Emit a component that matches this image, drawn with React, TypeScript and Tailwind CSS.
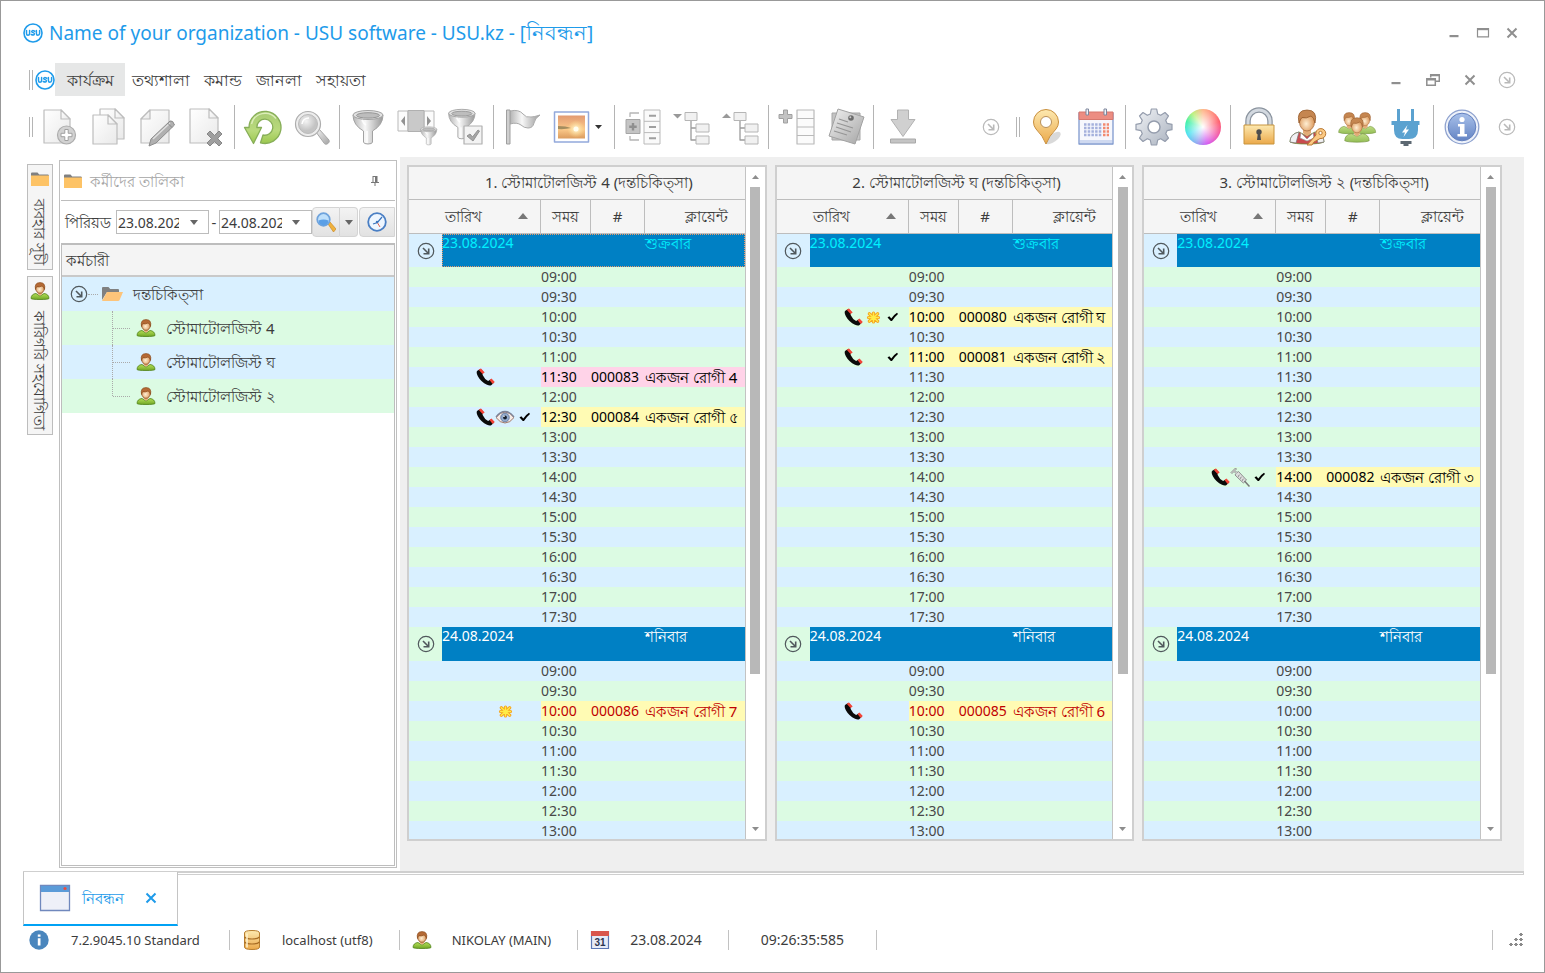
import type { ReactNode } from "react";
import clsx from "clsx";

type Mark = "phone" | "sun" | "eye" | "syringe" | "check";

interface Visit {
	code: string;
	client: string;
	marks: Mark[];
	tone: "yellow" | "pink";
	unpaid?: boolean;
}

interface Doctor {
	title: string;
	focused?: boolean;
	visits: Record<string, Visit>;
}

const DAYS = [
	{ date: "23.08.2024", weekday: "শুক্রবার", from: 18, to: 35, color: "text-[#00f0ff]" },
	{ date: "24.08.2024", weekday: "শনিবার", from: 18, to: 26, color: "text-white" },
];

const DOCTORS: Doctor[] = [
	{
		title: "1. স্টোমাটোলজিস্ট 4 (দন্তচিকিত্সা)",
		focused: true,
		visits: {
			"23.08.2024 11:30": { code: "000083", client: "একজন রোগী 4", marks: ["phone"], tone: "pink" },
			"23.08.2024 12:30": { code: "000084", client: "একজন রোগী ৫", marks: ["phone", "eye", "check"], tone: "yellow" },
			"24.08.2024 10:00": { code: "000086", client: "একজন রোগী 7", marks: ["sun"], tone: "yellow", unpaid: true },
		},
	},
	{
		title: "2. স্টোমাটোলজিস্ট ঘ (দন্তচিকিত্সা)",
		visits: {
			"23.08.2024 10:00": { code: "000080", client: "একজন রোগী ঘ", marks: ["phone", "sun", "check"], tone: "yellow" },
			"23.08.2024 11:00": { code: "000081", client: "একজন রোগী ২", marks: ["phone", "check"], tone: "yellow" },
			"24.08.2024 10:00": { code: "000085", client: "একজন রোগী 6", marks: ["phone"], tone: "yellow", unpaid: true },
		},
	},
	{
		title: "3. স্টোমাটোলজিস্ট ২ (দন্তচিকিত্সা)",
		visits: {
			"23.08.2024 14:00": { code: "000082", client: "একজন রোগী ৩", marks: ["phone", "syringe", "check"], tone: "yellow" },
		},
	},
];

const formatSlot = (slot: number) =>
	`${String(Math.floor(slot / 2)).padStart(2, "0")}:${slot % 2 ? "30" : "00"}`;

/* ---------- shared gradients ---------- */

const Gradients = () => (
	<svg className="absolute h-0 w-0" aria-hidden="true">
		<defs>
			<linearGradient id="paper" x1="0" y1="0" x2="1" y2="1">
				<stop offset="0" stopColor="#fff" />
				<stop offset="1" stopColor="#e9e9e9" />
			</linearGradient>
			<linearGradient id="steel" x1="0" y1="0" x2="1" y2="1">
				<stop offset="0" stopColor="#f2f2f2" />
				<stop offset="1" stopColor="#a4a4a4" />
			</linearGradient>
			<linearGradient id="funnel" x1="0" y1="0" x2="1" y2="0">
				<stop offset="0" stopColor="#b4b4b4" />
				<stop offset=".4" stopColor="#f8f8f8" />
				<stop offset="1" stopColor="#989898" />
			</linearGradient>
			<linearGradient id="green" x1="0" y1="0" x2="0" y2="1">
				<stop offset="0" stopColor="#a8cb74" />
				<stop offset=".6" stopColor="#b9da7c" />
				<stop offset="1" stopColor="#9cc84f" />
			</linearGradient>
			<linearGradient id="gear" x1="0" y1="0" x2="1" y2="1">
				<stop offset="0" stopColor="#f1f3f6" />
				<stop offset="1" stopColor="#aab2bf" />
			</linearGradient>
			<linearGradient id="gold" x1="0" y1="0" x2="0" y2="1">
				<stop offset="0" stopColor="#fde9b0" />
				<stop offset="1" stopColor="#eba94a" />
			</linearGradient>
			<linearGradient id="blue" x1="0" y1="0" x2="0" y2="1">
				<stop offset="0" stopColor="#a9c1ea" />
				<stop offset="1" stopColor="#6484c4" />
			</linearGradient>
			<linearGradient id="sunset" x1="0" y1="0" x2="0" y2="1">
				<stop offset="0" stopColor="#e29a72" />
				<stop offset=".6" stopColor="#fbc98a" />
				<stop offset="1" stopColor="#dc9c5e" />
			</linearGradient>
			<linearGradient id="shirt" x1="0" y1="0" x2="0" y2="1">
				<stop offset="0" stopColor="#b5df57" />
				<stop offset="1" stopColor="#71a726" />
			</linearGradient>
			<linearGradient id="softShirt" x1="0" y1="0" x2="0" y2="1">
				<stop offset="0" stopColor="#c0dd85" />
				<stop offset="1" stopColor="#93bd55" />
			</linearGradient>
			<radialGradient id="glow">
				<stop offset="0" stopColor="#fffbe0" />
				<stop offset="1" stopColor="#ffe08a" stopOpacity="0" />
			</radialGradient>
			<radialGradient id="face" cx=".45" cy=".6">
				<stop offset="0" stopColor="#ffeed2" />
				<stop offset="1" stopColor="#dfa066" />
			</radialGradient>
			<radialGradient id="lens" cx=".4" cy=".35">
				<stop offset="0" stopColor="#f4f4f4" />
				<stop offset="1" stopColor="#c4c4c4" />
			</radialGradient>
		</defs>
	</svg>
);

/* ---------- small icons ---------- */

const Logo = () => (
	<svg className="h-5 w-5 shrink-0" viewBox="0 0 20 20" aria-hidden="true">
		<circle cx="10" cy="10" r="9" fill="#fff" stroke="#1e9bea" strokeWidth="1.6" />
		<path
			d="M3.500 7.500v3q0 1.800 1.500 1.800t1.600-1.800v-3M11.700 8.200q-2.800-1.300-3 .3c-.1 1.400 2.800.9 2.700 2.400q-.3 1.800-3.200.6M13.400 7.500v3q0 1.800 1.500 1.800t1.700-1.800v-3"
			fill="none"
			stroke="#1e9bea"
			strokeWidth="1.500"
			strokeLinecap="round"
		/>
	</svg>
);

const CircleArrow = ({ dark = false }: { dark?: boolean }) => (
	<svg
		className={clsx("h-[18px] w-[18px]", dark ? "text-[#50585c]" : "text-[#b9b9b9]")}
		viewBox="0 0 18 18"
		fill="none"
		stroke="currentColor"
		aria-hidden="true">
		<circle cx="9" cy="9" r="7.700" strokeWidth="1.200" />
		<path d="M6 6l5.200 5.200M11.700 6.500v5.200H6.500" strokeWidth="1.600" />
	</svg>
);

const Triangle = ({ up = false, className = "" }: { up?: boolean; className?: string }) => (
	<svg className={clsx("fill-current", className)} viewBox="0 0 10 6" preserveAspectRatio="none" aria-hidden="true">
		<path d={up ? "M0 6L5 0l5 6z" : "M0 0h10L5 6z"} />
	</svg>
);

const UserIcon = () => (
	<svg className="h-[18px] w-5 shrink-0" viewBox="0 0 20 18" aria-hidden="true">
		<path d="M1 16.500Q1.200 12 6 11.500L10 14l4-2.500q4.800.5 5 5-1 1-9 1t-9-1z" fill="url(#shirt)" stroke="#4f8218" strokeWidth=".8" />
		<path d="M7.700 9.500h4.600v2.600L10 13.800l-2.300-1.700z" fill="#e9b27a" />
		<ellipse cx="10" cy="6.300" rx="4.300" ry="5" fill="url(#face)" stroke="#8b4d20" strokeWidth=".8" />
		<path d="M5.500 7.500Q4 .6 10 .6t4.500 6.900Q14 4.500 12 4 9 5.500 6.900 4.700 5.800 5.500 5.500 7.500z" fill="#b56a35" stroke="#874618" strokeWidth=".6" />
	</svg>
);

const FolderIcon = () => (
	<svg className="h-[14px] w-[18px] shrink-0" viewBox="0 0 18 14" aria-hidden="true">
		<path d="M0 4V1.500Q0 .5 1 .5h5.500l1.700 2H17q1 0 1 1.500z" fill="#808080" />
		<path d="M0 3.500h18V14H0z" fill="#fdc366" />
	</svg>
);

const OpenFolderIcon = () => (
	<svg className="h-[14px] w-[21px] shrink-0" viewBox="0 0 21 14" aria-hidden="true">
		<path d="M0 13V1q0-1 1-1h5.500L8.200 2H16q1 0 1 1v2H5z" fill="#808080" />
		<path d="M0 14L5 5h16l-3.500 8.200q-.4.8-1.500.8z" fill="#fdc47a" />
	</svg>
);

const PinIcon = () => (
	<svg className="h-[10px] w-2" viewBox="0 0 8 10" aria-hidden="true">
		<path d="M1.500 0h5v6H8v1H4.500v3h-1V7H0V6h1.500z" fill="#777" />
		<path d="M2.500 1h1.500v5H2.500z" fill="#fff" />
	</svg>
);

const MarkIcon = ({ kind }: { kind: Mark }) => {
	switch (kind) {
		case "phone":
			return (
				<svg className="h-5 w-5" viewBox="0 0 20 20" aria-hidden="true">
					<path d="M2 4Q1 5.500 3 9.500q3 5.500 9 8.200 3 1.300 4.500.2L19 15.500l-3.500-3-2.400 1.600Q9.500 12 7.500 7.700L8.500 5l-3-3.200z" fill="#0a0a0a" />
					<path d="M3.700 2.700L6 1.400l3.700 4.100L7.500 6.900zM14.500 13.100l2-1.700 3.300 3.600-2.200 2.100z" fill="#f44438" />
				</svg>
			);
		case "sun":
			return (
				<svg className="h-5 w-5" viewBox="0 0 20 20" aria-hidden="true">
					<g strokeLinecap="round">
						<path d="M6.300 6.800l8.400 7.400M14.700 6.800l-8.400 7.400M10.500 6v9M5.500 10.500h10" stroke="#f5a21f" strokeWidth="3.200" />
						<path d="M6.300 6.800l8.400 7.400M14.700 6.800l-8.400 7.400M10.500 6v9M5.500 10.500h10" stroke="#ffec45" strokeWidth="1.400" />
					</g>
				</svg>
			);
		case "eye":
			return (
				<svg className="h-5 w-5" viewBox="0 0 20 20" aria-hidden="true">
					<path d="M1 10.500Q5 5 10 5t9 5.500q-4 5.500-9 5.500t-9-5.500z" fill="#f5ece8" stroke="#a1786a" strokeWidth="1" />
					<path d="M1 10Q5 4.500 10 4.500t9 5.500" fill="none" stroke="#7d8499" strokeWidth="1.300" />
					<circle cx="10" cy="10.500" r="4.300" fill="#93abce" stroke="#5d7196" strokeWidth=".8" />
					<circle cx="10" cy="10.500" r="1.900" fill="#17202f" />
					<circle cx="9" cy="9.200" r=".8" fill="#fff" />
				</svg>
			);
		case "syringe":
			return (
				<svg className="h-5 w-5" viewBox="0 0 20 20" aria-hidden="true">
					<path d="M1 5.500L5.500 1l1 1-1.500 1.500 2 2 1.500-1L16.500 13l-3.200 3L5 8l1-1.500-2-2L2 6.500z" fill="#dcdcdc" stroke="#858585" strokeWidth=".9" />
					<path d="M8 9.500l1.500-1.400M10 11.500l1.500-1.400M12 13.500l1.500-1.400" stroke="#666" strokeWidth=".9" />
					<path d="M14.500 14l5 5.500" stroke="#777" strokeWidth="1.500" />
				</svg>
			);
		case "check":
			return (
				<svg className="h-5 w-5" viewBox="0 0 20 20" aria-hidden="true">
					<path d="M4.500 10.500l1.800-1.300 2 2.300Q10.500 8 14 5.800l1 1.200q-3.500 3-6 7H7.800z" fill="#000" />
				</svg>
			);
	}
};

/* ---------- toolbar icons ---------- */

const Big = ({ children }: { children: ReactNode }) => (
	<svg className="h-9 w-9 overflow-visible" viewBox="0 0 36 36" fill="none" strokeLinejoin="round" aria-hidden="true">
		{children}
	</svg>
);

const Page = ({ x = 2, y = 1, w = 26, h = 33 }: { x?: number; y?: number; w?: number; h?: number }) => (
	<g fill="url(#paper)" stroke="#bdbdbd" strokeWidth="1.200">
		<path d={`M${x} ${y}h${w - 9}l9 9v${h - 9}h${-w}z`} />
		<path d={`M${x + w - 9} ${y}v9h9z`} />
	</g>
);

const NewIcon = () => (
	<Big>
		<Page />
		<circle cx="24.500" cy="26" r="9" fill="#d2d2d2" stroke="#adadad" strokeWidth="1.200" />
		<path d="M22.800 20.500h3.400v3.800H30v3.400h-3.800v3.800h-3.400v-3.800H19v-3.400h3.800z" fill="#fff" stroke="#a0a0a0" />
	</Big>
);

const CopyIcon = () => (
	<Big>
		<Page x={9} y={0} w={24} h={30} />
		<Page x={2} y={6} w={24} h={29} />
	</Big>
);

const EditIcon = () => (
	<Big>
		<g fill="url(#paper)" stroke="#bdbdbd" strokeWidth="1.200">
			<path d="M1 10l9-9h19v33H1z" />
			<path d="M1 10h9V1z" />
		</g>
		<path d="M9 37l2-7 19-18q3-1 4.500 4L16 34z" fill="#b0b0b0" stroke="#8c8c8c" />
		<path d="M13 30l17-16" stroke="#e0e0e0" strokeWidth="1.300" />
		<path d="M27.500 14l4.500 4.500" stroke="#888" />
	</Big>
);

const DeleteIcon = () => (
	<Big>
		<Page x={1} y={0} w={28} h={34} />
		<path d="M18 25l3-3 4.500 4.500L30 22l3 3-4.500 4.500L33 34l-3 3-4.500-4.500L21 37l-3-3 4.500-4.500z" fill="#9f9f9f" stroke="#878787" />
	</Big>
);

const RefreshIcon = () => (
	<Big>
		<path
			d="M4 18.500A16 16 0 1 1 15.500 33.800L18 26a8 8 0 1 0-6.200-7.500h4.700L8.500 34.500-.5 18.500z"
			fill="url(#green)"
			stroke="#87ae58"
			strokeWidth="1.300"
		/>
		<path d="M6.500 15A14 14 0 0 1 31 9.500" stroke="#dcedba" strokeWidth="1.400" />
	</Big>
);

const SearchIcon = () => (
	<Big>
		<path d="M22 23l3-3L35 31q1 2-1 3.500t-3.500.2z" fill="url(#steel)" stroke="#a8a8a8" />
		<circle cx="14" cy="15" r="12.500" fill="#ededed" stroke="#adadad" strokeWidth="1.200" />
		<circle cx="14" cy="15" r="9.500" fill="url(#lens)" stroke="#bbb" />
		<path d="M8 15q1-6 7-6" stroke="#fff" strokeWidth="1.500" />
	</Big>
);

const FunnelShape = () => (
	<>
		<path d="M3 6q0 10 10.500 16V33q0 2 4.500 2t4.500-2V22Q33 16 33 6z" fill="url(#funnel)" stroke="#a2a2a2" />
		<ellipse cx="18" cy="6" rx="15" ry="4.500" fill="#e2e2e2" stroke="#a2a2a2" />
		<ellipse cx="18" cy="6.400" rx="11.500" ry="2.700" fill="#bdbdbd" stroke="#959595" />
		<path d="M17 22v12M12 11q2 4 4 5" stroke="#fff" strokeWidth="1.800" opacity=".8" />
	</>
);

const FilterIcon = () => (
	<Big>
		<FunnelShape />
	</Big>
);

const ColumnFilterIcon = () => (
	<Big>
		<path d="M-1 2h10v20H-1zM25 2h10v20H25z" fill="#fbfbfb" stroke="#b9b9b9" />
		<path d="M9 1.500h16v21H9z" fill="#c9c9c9" stroke="#b0b0b0" />
		<path d="M6 7v10l-4-5zM28 7v10l4-5z" fill="#929292" />
		<g transform="translate(20 17) scale(.54)">
			<FunnelShape />
		</g>
	</Big>
);

const FilterCheckIcon = () => (
	<Big>
		<g transform="translate(-2 -1) scale(.88)">
			<FunnelShape />
		</g>
		<path d="M16 17h18v18H16z" fill="#f3f3f3" stroke="#b0b0b0" strokeWidth="1.200" />
		<path d="M19 27l3-2 2.500 3 5.500-7 1.500 1-6.500 10z" fill="#a6a6a6" stroke="#929292" />
	</Big>
);

const FlagIcon = () => (
	<Big>
		<path d="M6 2q9-2 13 3 3 4 8 3 3 0 9-2-5 3-6 8t-6 5q-4 0-7-3-4-3-11-1z" fill="url(#funnel)" stroke="#aaa" />
		<path d="M2.500 1H6v34H2.500z" fill="#cfcfcf" stroke="#9f9f9f" />
	</Big>
);

const PictureIcon = () => (
	<Big>
		<path d="M1.500 3h34v30h-34z" fill="#fff" stroke="#93a9db" strokeWidth="1.500" />
		<path d="M5 6.500h27v23H5z" fill="url(#sunset)" />
		<circle cx="23" cy="20" r="9" fill="url(#glow)" />
		<path d="M5 17q8 0 13 2-6 1.500-13 1z" fill="#8e7f55" opacity=".8" />
		<circle cx="23" cy="20" r="2.500" fill="#fffef0" />
	</Big>
);

const ExpandListIcon = () => (
	<Big>
		<path d="M19 1h16v34H19zM19 12.300h16M19 23.600h16" fill="#fafafa" stroke="#bababa" />
		<path d="M24 6.700h7M24 18h7M24 29.300h7" stroke="#9f9f9f" strokeWidth="2" />
		<path d="M1 10.500h14v14H1z" fill="#c4c4c4" stroke="#a6a6a6" />
		<path d="M8 14v7.500M4.200 17.700h7.500" stroke="#8f8f8f" strokeWidth="2.400" />
		<path d="M5 8V4h9M5 27v4h9" stroke="#b5b5b5" strokeWidth="1.300" />
	</Big>
);

const TreeIcon = ({ up = false }: { up?: boolean }) => (
	<Big>
		<path d={up ? "M-1 9h9L3.500 4.500z" : "M-1 5h9L3.500 9.500z"} fill="#999" />
		<path d="M17 11v20h6M17 19h6" stroke="#9c9c9c" strokeWidth="1.300" />
		<path d="M11 3.500h12v8H11zM22 15h13v8H22zM22 27h13v8H22z" fill="#f1f1f1" stroke="#b5b5b5" />
	</Big>
);

const AddRowsIcon = () => (
	<Big>
		<path d="M4.500 1h4v4.500H13v4H8.500V14h-4V9.500H0v-4h4.500z" fill="#c3c3c3" stroke="#a0a0a0" />
		<path d="M18 1h17v34H18zM18 9.500h17M18 18h17M18 26.500h17" fill="#fbfbfb" stroke="#bababa" strokeWidth="1.200" />
	</Big>
);

const NotesIcon = () => (
	<Big>
		<path d="M4 4h28v27H4z" fill="#c4c4c4" stroke="#a6a6a6" />
		<path d="M10 0l26 8-9 27-26-8z" fill="url(#steel)" stroke="#a2a2a2" />
		<path d="M11 10l9 3M9 14l16 5M8 18l15 5M6 22l13 4" stroke="#959595" strokeWidth="1.200" />
		<circle cx="23" cy="9" r="2.800" fill="#6c6c6c" />
		<circle cx="22.300" cy="8.200" r="1" fill="#ccc" />
	</Big>
);

const DownloadIcon = () => (
	<Big>
		<path d="M13.500 1h11v9.500H31L19 27.500 7 10.500h6.500z" fill="#d0d0d0" stroke="#b2b2b2" />
		<path d="M6.500 30h25v4h-25z" fill="#c4c4c4" stroke="#a8a8a8" />
	</Big>
);

const PlaceIcon = () => (
	<Big>
		<ellipse cx="22" cy="29" rx="9" ry="4" fill="#777" opacity=".28" transform="rotate(-35 22 29)" />
		<path d="M15 35Q12 27 5 20 2.500 17 2.500 13a12.500 12.500 0 0 1 25 0q0 4-2.500 7-7 7-10 15z" fill="url(#gold)" stroke="#c98f3d" />
		<circle cx="15" cy="13" r="5.500" fill="#fff" stroke="#b8905a" />
	</Big>
);

const CalendarIcon = () => (
	<Big>
		<path d="M-1 4h34v31H-1z" fill="#f6f7fc" stroke="#7f99ce" strokeWidth="1.300" />
		<path d="M-1 3h34v7.500H-1z" fill="#ec8d82" stroke="#d6776d" />
		<path d="M6 0h2.500v6H6zM24 0h2.500v6H24z" fill="#eef1f8" stroke="#7e879c" />
		<path d="M4 15.500h18M4 19h18M4 22.500h18M4 26h18" stroke="#a5b1dc" strokeWidth="2.400" strokeDasharray="2.500 1.200" />
		<path d="M23 15.500h6M23 19h6M23 22.500h6M23 26h6" stroke="#f28b70" strokeWidth="2.400" strokeDasharray="2.500 1.200" />
		<path d="M0 31h32v3H0z" fill="#cfd9f0" />
	</Big>
);

const GearIcon = () => (
	<Big>
		<path
			d="M15.300 0h5.400l1 5 3 1.300L29 3.500 32.500 7l-2.800 4.300 1.300 3 5 1v5.400l-5 1-1.300 3 2.800 4.300L29 32.500l-4.300-2.800-3 1.300-1 5h-5.400l-1-5-3-1.300L7 32.500 3.500 29l2.800-4.300-1.300-3-5-1v-5.400l5-1 1.300-3L3.500 7 7 3.500l4.300 2.800 3-1.300z"
			fill="url(#gear)"
			stroke="#959dad"
			strokeWidth="1.200"
		/>
		<circle cx="18" cy="18" r="6" fill="#fff" stroke="#959dad" strokeWidth="1.500" />
	</Big>
);

const ColorWheel = () => (
	<span className="h-9 w-9 rounded-full bg-[radial-gradient(circle,white_0%,transparent_75%),conic-gradient(#ffb080,#ff5060_20%,#f04ca8_34%,#d04cf0_46%,#8aa0f0_56%,#40e0f0_68%,#30f0a0_80%,#b8f070_90%,#ffb080)]" />
);

const LockIcon = () => (
	<Big>
		<path d="M7 17v-5a11 11 0 0 1 22 0v5" stroke="#8b949f" strokeWidth="5.500" />
		<path d="M7 17v-5a11 11 0 0 1 22 0v5" stroke="#d3d9e0" strokeWidth="3" />
		<path d="M3 16h30v19H3z" fill="url(#gold)" stroke="#c8943c" />
		<circle cx="18" cy="23" r="2.700" fill="#4d4d4d" />
		<path d="M17 23h2l1 8h-4z" fill="#4d4d4d" />
	</Big>
);

const Person = ({ shirt }: { shirt: string }) => (
	<>
		<path d="M1 33q0-8 9-10l8 4 8-4q9 2 9 10-4 2-17 2T1 33z" fill={shirt} stroke="#6d8a3a" strokeWidth=".8" />
		<path d="M14 19h8v5l-4 3.500-4-3.500z" fill="#e3ad77" />
		<ellipse cx="18" cy="13" rx="7.500" ry="9" fill="url(#face)" stroke="#a96d3f" strokeWidth=".8" />
		<path d="M10 14Q7 1 18 1t8 13q-1-6-4-7-5 3-9 1.500-2 2-3 5.500z" fill="#c58650" stroke="#965a2b" strokeWidth=".8" />
	</>
);

const UserKeyIcon = () => (
	<Big>
		<g transform="translate(-1 0)">
			<Person shirt="#c94a4e" />
			<path d="M1 33q0-8 9-10l-3 11zM35 33q0-8-9-10l3 11z" fill="#f1f1f3" stroke="#777" strokeWidth=".7" />
			<path d="M12 24l6 6 6-6 1 5-7 3-7-3z" fill="#fff" stroke="#999" strokeWidth=".7" />
		</g>
		<path d="M17 36l9-10a5 5 0 1 1 4 3.500L24 33l-2 3z" fill="#fbc983" stroke="#b97a35" />
		<circle cx="30.500" cy="24" r="1.700" fill="#fff" stroke="#b97a35" />
	</Big>
);

const UsersIcon = () => (
	<Big>
		<g transform="translate(-1 3) scale(.62)">
			<Person shirt="url(#softShirt)" />
		</g>
		<g transform="translate(15 3) scale(.62)">
			<Person shirt="url(#softShirt)" />
		</g>
		<g transform="translate(5 8) scale(.72)">
			<Person shirt="url(#softShirt)" />
		</g>
	</Big>
);

const PlugIcon = () => (
	<Big>
		<path d="M9 0h3v12H9zM23 0h3v12h-3z" fill="#5ba2d0" />
		<path d="M3.500 12h28v4H30v5q0 9-9 9h-6.500Q6 30 6 21v-5H3.500z" fill="#5ba2d0" />
		<path d="M19.500 16L14 23.500h3l-1.500 4.500 5.500-7.500h-3z" fill="#fff" />
		<path d="M12.500 32h11v3h-3v2h-5v-2h-3z" fill="#5d6872" />
	</Big>
);

const InfoIcon = () => (
	<Big>
		<circle cx="18" cy="18" r="16.800" fill="#eef2fa" stroke="#8ea2cf" strokeWidth="1.300" />
		<circle cx="18" cy="18" r="13.800" fill="url(#blue)" stroke="#6380be" />
		<circle cx="18" cy="10.500" r="2.600" fill="#fff" />
		<path d="M14 15h6.500v10H23v2.500h-9.500V25h2.500v-7.500h-2z" fill="#fff" />
	</Big>
);

/* ---------- building blocks ---------- */

const Handle = () => <span className="h-5 w-1 shrink-0 border-x border-[#b5b5b5]" />;

const Separator = () => <span className="mx-[3px] h-11 w-px shrink-0 bg-[#b4b4b4]" />;

const Tool = ({ label, children }: { label: string; children: ReactNode }) => (
	<button type="button" aria-label={label} className="flex h-11 w-[49px] shrink-0 items-center justify-center">
		{children}
	</button>
);

const DateField = ({ id, value, label }: { id: string; value: string; label: string }) => (
	<span className="flex h-6 w-[95px] items-center border border-[#bcbcbc] bg-white">
		<input
			id={id}
			aria-label={label}
			defaultValue={value}
			className="h-full w-[62px] bg-transparent pl-px text-sm outline-none"
		/>
		<button type="button" aria-label={label} className="flex h-full flex-1 items-center justify-center">
			<Triangle className="h-[5px] w-2 text-[#666]" />
		</button>
	</span>
);

const SideTab = ({ icon, text }: { icon: ReactNode; text: string }) => (
	<button
		type="button"
		className="flex w-[26px] flex-col items-center gap-[10px] border border-[#bdbdbd] bg-[#f5f5f5] py-1">
		<span className="flex h-5 items-center">{icon}</span>
		<span className="[writing-mode:vertical-rl]">{text}</span>
	</button>
);

const WindowButtons = ({ restore = false }: { restore?: boolean }) => (
	<div className={clsx("flex items-center text-[#8f8f8f]", restore ? "gap-6" : "gap-4")}>
		<button type="button" aria-label="Minimize">
			<svg className="h-3 w-3" viewBox="0 0 12 12">
				<path d="M1.500 8h9v2.200h-9z" fill="currentColor" />
			</svg>
		</button>
		<button type="button" aria-label="Maximize">
			{restore ? (
				<svg className="h-3 w-[14px]" viewBox="0 0 14 12" fill="none" stroke="currentColor">
					<path d="M4.700 3.500V.8h8.600v6.500h-3.500M4.500 1.500h9M.8 4.700h8.500v6.500H.8zM1 5.700h8" strokeWidth="1.500" />
				</svg>
			) : (
				<svg className="h-3 w-[14px]" viewBox="0 0 14 12" fill="none" stroke="currentColor">
					<path d="M1.500 1.500h11v8.300h-11z" strokeWidth="1.200" />
					<path d="M1 2.200h12" strokeWidth="2" />
				</svg>
			)}
		</button>
		<button type="button" aria-label="Close">
			<svg className="h-3 w-3" viewBox="0 0 12 12">
				<path d="M1.500 1.500l9 9M10.500 1.500l-9 9" stroke="currentColor" strokeWidth="2" />
			</svg>
		</button>
	</div>
);

const ScrollBar = () => (
	<div className="flex w-5 shrink-0 flex-col items-center border-l border-[#c3c3c3] bg-white py-2 text-[#8d8d8d]">
		<Triangle up className="h-1 w-[7px] shrink-0" />
		<div className="mt-2 mb-2 w-[10px] flex-1">
			<div className="h-[77%] bg-[#b8b8b8]" />
		</div>
		<Triangle className="h-1 w-[7px] shrink-0" />
	</div>
);

const MARK_SLOTS: Mark[][] = [["phone"], ["sun", "eye", "syringe"], ["check"]];

const Schedule = ({ doctor }: { doctor: Doctor }) => {
	let index = 0;
	const stripe = () => (index++ % 2 === 0 ? "bg-[#d9f0ff]" : "bg-[#dcfbe3]");

	return (
		<section className="flex min-w-0 flex-1 overflow-hidden border-2 border-[#cfcfcf] bg-white">
			<div className="min-w-0 flex-1 overflow-hidden">
				<table className="w-full table-fixed border-separate border-spacing-0 text-sm">
					<colgroup>
						<col className="w-[33px]" />
						<col className="w-[99px]" />
						<col className="w-[50px]" />
						<col className="w-[54px]" />
						<col />
					</colgroup>
					<thead className="bg-[#f5f5f5] text-[15px]">
						<tr className="h-[33px]">
							<th colSpan={5} className="border-b border-[#bdbdbd] pl-6 font-normal whitespace-nowrap">
								{doctor.title}
							</th>
						</tr>
						<tr className="h-[34px]">
							<th colSpan={2} className="border-r border-b border-[#bdbdbd] font-normal">
								<span className="flex items-center pr-3">
									<span className="flex-1 text-center">তারিখ</span>
									<Triangle up className="h-[6px] w-[10px] text-[#777]" />
								</span>
							</th>
							<th className="border-r border-b border-[#bdbdbd] font-normal">সময়</th>
							<th className="border-r border-b border-[#bdbdbd] font-normal">#</th>
							<th className="border-b border-[#bdbdbd] pl-6 font-normal">ক্লায়েন্ট</th>
						</tr>
					</thead>
					{DAYS.map((day, dayIndex) => (
						<tbody key={day.date}>
							<tr className={clsx("align-top", dayIndex === 0 ? "h-[33px]" : "h-[34px]", stripe())}>
								<td className="align-middle">
									<button type="button" aria-label={day.date} className="mx-auto block">
										<CircleArrow dark />
									</button>
								</td>
								<td
									colSpan={4}
									className={clsx(
										"bg-[#0080c4]",
										day.color,
										doctor.focused && dayIndex === 0 && "outline-1 -outline-offset-1 outline-dotted outline-[#e79a6b]"
									)}>
									<span className="flex leading-[18px]">
										<span className="w-[203px] shrink-0">{day.date}</span>
										<span className="text-[15px]">{day.weekday}</span>
									</span>
								</td>
							</tr>
							{Array.from({ length: day.to - day.from + 1 }, (_, i) => {
								const time = formatSlot(day.from + i);
								const visit = doctor.visits[`${day.date} ${time}`];
								const cell = clsx(
									"p-0 whitespace-nowrap",
									visit?.tone === "pink" && "bg-[#ffd3e8]",
									visit?.tone === "yellow" && "bg-[#fffbb4]",
									visit ? (visit.unpaid ? "text-[#c00000]" : "text-black") : "text-[#484848]"
								);
								return (
									<tr key={time} className={clsx("h-5", stripe())}>
										<td colSpan={2} className="p-0">
											{visit && (
												<span className="flex h-5 justify-end pr-[6px]">
													{MARK_SLOTS.map((slot, n) => {
														const mark = visit.marks.find((m) => slot.includes(m));
														return (
															<span key={n} className="h-5 w-5">
																{mark && <MarkIcon kind={mark} />}
															</span>
														);
													})}
												</span>
											)}
										</td>
										<td className={cell}>{time}</td>
										<td className={cell}>{visit?.code}</td>
										<td className={clsx(cell, "overflow-hidden")}>
											{visit && <span className="block h-5 text-[15px] leading-5">{visit.client}</span>}
										</td>
									</tr>
								);
							})}
						</tbody>
					))}
				</table>
			</div>
			<ScrollBar />
		</section>
	);
};

const StatusSeparator = () => <span className="h-5 w-px shrink-0 bg-[#c2c2c2]" />;

/* ---------- page ---------- */

export default function App() {
	return (
		<div className="flex h-screen flex-col overflow-hidden border border-[#999] bg-white pr-5 pl-[22px] font-['Noto_Sans',sans-serif] text-[15px] leading-5 text-[#3c3c3c]">
			<Gradients />

			<header className="flex h-[62px] shrink-0 items-center justify-between pt-px pr-[6px]">
				<h1 className="flex items-center gap-[6px] text-[19px] leading-8 whitespace-nowrap text-[#1e9bea]">
					<Logo />
					<span>
						Name of your organization - USU software - USU.kz - [<span className="text-[21px]">নিবন্ধন</span>]
					</span>
				</h1>
				<WindowButtons />
			</header>

			<nav className="flex h-[33px] shrink-0 items-center pl-[6px] text-base">
				<Handle />
				<span className="ml-[2px] flex">
					<Logo />
				</span>
				<button type="button" className="h-full w-[70px] bg-[#e6e7e7]">কার্যক্রম</button>
				<button type="button" className="h-full px-[7px]">তথ্যশালা</button>
				<button type="button" className="h-full px-[7px]">কমান্ড</button>
				<button type="button" className="h-full px-[7px]">জানলা</button>
				<button type="button" className="h-full px-[7px]">সহায়তা</button>
				<div className="ml-auto flex items-center gap-[22px] pr-2">
					<WindowButtons restore />
					<button type="button" aria-label="Menu options">
						<CircleArrow />
					</button>
				</div>
			</nav>

			<div className="flex h-[61px] shrink-0 items-center pr-2 pl-[6px]">
				<Handle />
				<span className="ml-[2px] flex items-center">
					<Tool label="Add"><NewIcon /></Tool>
					<Tool label="Copy"><CopyIcon /></Tool>
					<Tool label="Edit"><EditIcon /></Tool>
					<Tool label="Delete"><DeleteIcon /></Tool>
					<Separator />
					<Tool label="Refresh"><RefreshIcon /></Tool>
					<Tool label="Search"><SearchIcon /></Tool>
					<Separator />
					<Tool label="Filter"><FilterIcon /></Tool>
					<Tool label="Filter by column"><ColumnFilterIcon /></Tool>
					<Tool label="Filter by value"><FilterCheckIcon /></Tool>
					<Separator />
					<Tool label="Flag"><FlagIcon /></Tool>
					<Tool label="Picture"><PictureIcon /></Tool>
					<button type="button" aria-label="Picture options" className="flex h-11 w-4 shrink-0 items-center">
						<Triangle className="h-1 w-[7px] text-[#333]" />
					</button>
					<Separator />
					<Tool label="Group"><ExpandListIcon /></Tool>
					<Tool label="Expand all"><TreeIcon /></Tool>
					<Tool label="Collapse all"><TreeIcon up /></Tool>
					<Separator />
					<Tool label="Add rows"><AddRowsIcon /></Tool>
					<Tool label="Notes"><NotesIcon /></Tool>
					<Separator />
					<Tool label="Download"><DownloadIcon /></Tool>
				</span>
				<button type="button" aria-label="Toolbar options" className="mr-4 ml-auto">
					<CircleArrow />
				</button>
				<Handle />
				<span className="ml-1 flex items-center">
					<Tool label="Places"><PlaceIcon /></Tool>
					<Tool label="Calendar"><CalendarIcon /></Tool>
					<Separator />
					<Tool label="Settings"><GearIcon /></Tool>
					<Tool label="Colors"><ColorWheel /></Tool>
					<Separator />
					<Tool label="Lock"><LockIcon /></Tool>
					<Tool label="Access"><UserKeyIcon /></Tool>
					<Tool label="Users"><UsersIcon /></Tool>
					<Tool label="Connection"><PlugIcon /></Tool>
					<Separator />
					<Tool label="About"><InfoIcon /></Tool>
				</span>
				<button type="button" aria-label="Toolbar options" className="ml-3">
					<CircleArrow />
				</button>
			</div>

			<main className="flex min-h-0 flex-1">
				<div className="flex w-9 shrink-0 flex-col items-start gap-[6px] pt-[7px] pl-1">
					<SideTab icon={<FolderIcon />} text="ব্যবহার সূচী" />
					<SideTab icon={<UserIcon />} text="কারিগরি সহযোগিতা" />
				</div>

				<aside className="my-[3px] mr-[3px] flex w-[338px] shrink-0 flex-col border border-[#bfbfbf] p-px">
					<div className="flex h-[39px] shrink-0 items-center gap-2 border-b border-[#bdbdbd] pr-4 pl-[3px] text-[#a6a6a6]">
						<FolderIcon />
						<h2 className="flex-1">কর্মীদের তালিকা</h2>
						<button type="button" aria-label="Pin">
							<PinIcon />
						</button>
					</div>
					<div className="flex h-[42px] shrink-0 items-center overflow-hidden pl-1">
						<label htmlFor="period-from" className="w-[51px] shrink-0 whitespace-nowrap">পিরিয়ড</label>
						<DateField id="period-from" value="23.08.2024" label="From" />
						<span className="w-[10px] text-center">-</span>
						<DateField id="period-to" value="24.08.2024" label="To" />
						<button type="button" aria-label="Find" className="flex h-[30px] w-7 shrink-0 items-center justify-center rounded-l border border-[#d4d4d4] bg-linear-to-b from-[#f3f3f3] to-[#e2e2e2]">
							<svg className="h-5 w-5" viewBox="0 0 20 20" aria-hidden="true">
								<path d="M12 12l2-2 6 7-2.500 3z" fill="#f0b23c" stroke="#c88a28" strokeWidth=".7" />
								<circle cx="7.500" cy="7.500" r="6.300" fill="#bfe0fb" stroke="#6fa3dc" strokeWidth="1.700" />
								<path d="M2.500 8.500a5 5 0 0 0 10 0q-5-2-10 0z" fill="#5a9fe6" />
							</svg>
						</button>
						<button type="button" aria-label="Find options" className="flex h-[30px] w-[18px] shrink-0 items-center justify-center rounded-r border border-l-0 border-[#d4d4d4] bg-linear-to-b from-[#f3f3f3] to-[#e2e2e2]">
							<Triangle className="h-[5px] w-2 text-[#666]" />
						</button>
						<button type="button" aria-label="Now" className="ml-px flex h-[30px] w-9 shrink-0 items-center justify-center rounded-l border border-[#d4d4d4] bg-linear-to-b from-[#f3f3f3] to-[#e2e2e2]">
							<svg className="h-5 w-5" viewBox="0 0 20 20" aria-hidden="true">
								<circle cx="10" cy="10" r="8.800" fill="#eef6ff" stroke="#4a7fc4" strokeWidth="1.800" />
								<path d="M15 5l-4.500 5.500L6 12" fill="none" stroke="#3a74bd" strokeWidth="1.200" />
								<path d="M10 10l3 5" stroke="#e2614f" />
								<circle cx="10" cy="10" r="1.200" fill="#3a74bd" />
							</svg>
						</button>
					</div>
					<div className="min-h-0 flex-1 border border-t-2 border-[#bdbdbd]">
						<h3 className="flex h-8 items-center border-b-2 border-[#c9c9c9] bg-[#f4f4f4] pl-1">কর্মচারী</h3>
						<ul>
							<li>
								<div className="flex h-[34px] items-center bg-[#d9f0ff] pl-2">
									<button type="button" aria-label="দন্তচিকিত্সা">
										<CircleArrow dark />
									</button>
									<span className="mr-1 w-[10px] border-t border-dotted border-[#aaa]" />
									<OpenFolderIcon />
									<span className="pl-[10px]">দন্তচিকিত্সা</span>
								</div>
								<ul>
									{["স্টোমাটোলজিস্ট 4", "স্টোমাটোলজিস্ট ঘ", "স্টোমাটোলজিস্ট ২"].map((name, i) => (
										<li
											key={name}
											className={clsx(
												"flex h-[34px] items-center gap-[10px] pl-[50px]",
												i % 2 ? "bg-[#d9f0ff]" : "bg-[#dcfbe3]"
											)}>
											<span className="flex h-full items-center">
												<span className={clsx("self-start border-l border-dotted border-[#aaa]", i === 2 ? "h-[17px]" : "h-[34px]")} />
												<span className="mr-[6px] w-[17px] border-t border-dotted border-[#aaa]" />
												<UserIcon />
											</span>
											<span>{name}</span>
										</li>
									))}
								</ul>
							</li>
						</ul>
					</div>
				</aside>

				<div className="flex min-w-0 flex-1 gap-2 bg-[#efefef] pt-2 pr-[22px] pb-[30px] pl-[7px]">
					{DOCTORS.map((doctor) => (
						<Schedule key={doctor.title} doctor={doctor} />
					))}
				</div>
			</main>

			<footer className="shrink-0 text-[13px]">
				<div className="h-1 border-t-2 border-r border-b border-[#cfcfcf]" />
				<div className="-mt-[3px] flex h-[54px] w-[155px] items-center border-x border-b-2 border-x-[#c4c4c4] border-b-[#00a2f5] bg-white pl-[15px] text-[#1e9bea]">
					<svg className="h-7 w-8" viewBox="0 0 32 28" aria-hidden="true">
						<path d="M1.500 1.500h29v25h-29z" fill="#eef0f8" stroke="#7088bd" strokeWidth="1.300" />
						<path d="M2 2h28v6H2z" fill="#5b9bd8" />
						<circle cx="26" cy="4.500" r="1.600" fill="#ee4b3c" />
					</svg>
					<span className="pl-[11px] text-[15px]">নিবন্ধন</span>
					<button type="button" aria-label="Close tab" className="ml-auto pr-5">
						<svg className="h-3 w-3" viewBox="0 0 12 12">
							<path d="M1.500 1.500l9 9M10.500 1.500l-9 9" stroke="currentColor" strokeWidth="2" />
						</svg>
					</button>
				</div>
				<div className="mb-[18px] flex h-7 items-center pl-[6px] whitespace-nowrap">
					<svg className="h-5 w-5" viewBox="0 0 20 20" aria-hidden="true">
						<circle cx="10" cy="10" r="9.700" fill="#4a86bd" />
						<path d="M8.800 4.500h2.700v2.300H8.800zM8.800 8.200h2.700v7.300H8.800z" fill="#fff" />
					</svg>
					<span className="pr-[29px] pl-[22px]">7.2.9045.10 Standard</span>
					<StatusSeparator />
					<svg className="ml-3 h-5 w-5" viewBox="0 0 20 20" aria-hidden="true">
						<path d="M2.500 3q0-2.500 7.500-2.500T17.500 3v14q0 2.500-7.500 2.500T2.500 17z" fill="url(#gold)" stroke="#b87f31" />
						<path d="M2.500 7q2 2 7.500 2t7.500-2M2.500 12q2 2 7.500 2t7.500-2" fill="none" stroke="#a86d25" strokeWidth="1.200" />
						<path d="M5 3.500v14" stroke="#fff3cf" strokeWidth="1.500" />
					</svg>
					<span className="pr-[26px] pl-5">localhost (utf8)</span>
					<StatusSeparator />
					<span className="pl-3">
						<UserIcon />
					</span>
					<span className="pr-[26px] pl-5">NIKOLAY (MAIN)</span>
					<StatusSeparator />
					<svg className="ml-3 h-5 w-5" viewBox="0 0 20 20" aria-hidden="true">
						<path d="M1.500 1.500h17v17h-17z" fill="#e6ebf7" stroke="#5b77b5" strokeWidth="1.200" />
						<path d="M1 1h18v5H1z" fill="#d9564c" />
						<text x="10" y="16" textAnchor="middle" fontSize="10" fontWeight="bold" fill="#2c3550" fontFamily="Liberation Sans">31</text>
					</svg>
					<span className="pr-[26px] pl-5 text-sm">23.08.2024</span>
					<StatusSeparator />
					<span className="px-8 text-sm">09:26:35:585</span>
					<StatusSeparator />
					<span className="mr-4 ml-auto flex">
						<StatusSeparator />
					</span>
					<svg className="h-4 w-[15px]" viewBox="0 0 15 16" fill="#8a8a8a" aria-hidden="true">
						<path d="M11 1h2v3h-2zM6 6h2v3H6zM11 6h2v3h-2zM1 11h2v3H1zM6 11h2v3H6zM11 11h2v3h-2z" />
						<path d="M10 2h4v1h-4zM5 7h4v1H5zM10 7h4v1h-4zM0 12h4v1H0zM5 12h4v1H5zM10 12h4v1h-4z" />
					</svg>
				</div>
			</footer>
		</div>
	);
}
